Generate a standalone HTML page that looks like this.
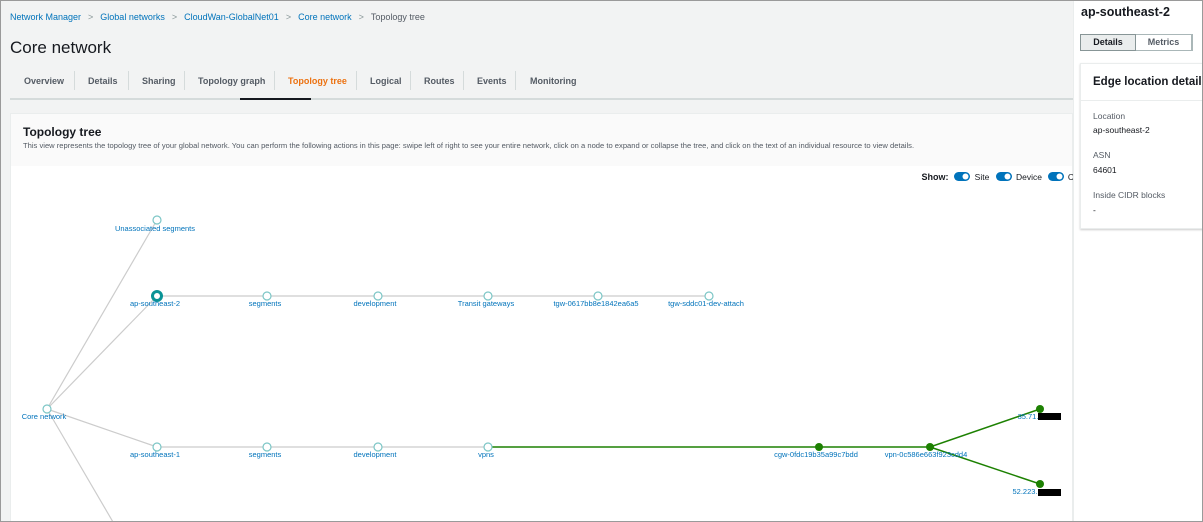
<!DOCTYPE html>
<html><head><style>
*{box-sizing:border-box;margin:0;padding:0}
html,body{width:1203px;height:522px;overflow:hidden}
body{font-family:"Liberation Sans",sans-serif;background:#f2f3f3;position:relative}
.a{position:absolute;white-space:nowrap}
.bc{top:12px;left:10px;font-size:9px;color:#0073bb}
.bc span.s{color:#879596;margin:0 7px}
.bc .c{color:#545b64}
h1{position:absolute;top:38px;left:10px;font-size:17px;font-weight:400;color:#16191f}
.tabs{top:76px;left:10px;font-size:9px;font-weight:bold;color:#545b64}
.tabs span{position:absolute;top:0}
.sep{position:absolute;top:71px;width:1px;height:19px;background:#d5dbdb}
.card{position:absolute;left:10px;top:113px;width:1063px;height:420px;background:#fff;border:1px solid #eaeded}
.ch{position:absolute;left:0;top:0;width:100%;height:52px;background:#fafafa}
.panel{position:absolute;left:1073px;top:0;width:130px;height:522px;background:#fff;border-left:1px solid #eaeded;overflow:hidden}
svg text{font-family:"Liberation Sans",sans-serif;font-size:7.5px;fill:#0073bb;text-anchor:middle}
.frame{position:absolute;left:0;top:0;width:1203px;height:522px;border:1px solid #9a9a9a;pointer-events:none}
</style></head><body>
<div class="a bc">Network Manager<span class="s">&gt;</span>Global networks<span class="s">&gt;</span>CloudWan-GlobalNet01<span class="s">&gt;</span>Core network<span class="s">&gt;</span><span class="c">Topology tree</span></div>
<h1>Core network</h1>
<div class="a tabs" style="width:700px;height:20px">
<span style="left:14px">Overview</span><span style="left:78px">Details</span><span style="left:132px">Sharing</span><span style="left:188px">Topology graph</span><span style="left:278px;color:#ec7211">Topology tree</span><span style="left:360px">Logical</span><span style="left:414px">Routes</span><span style="left:467px">Events</span><span style="left:520px">Monitoring</span>
</div>
<div class="sep" style="left:74px"></div><div class="sep" style="left:128px"></div><div class="sep" style="left:184px"></div><div class="sep" style="left:274px"></div><div class="sep" style="left:356px"></div><div class="sep" style="left:410px"></div><div class="sep" style="left:463px"></div><div class="sep" style="left:515px"></div>
<div class="a" style="left:10px;top:98px;width:1063px;height:2px;background:#d5dbdb"></div>
<div class="a" style="left:240px;top:98px;width:71px;height:2px;background:#16191f"></div>
<div class="card"><div class="ch"></div>
<div class="a" style="left:12px;top:11px;font-size:12px;font-weight:bold;color:#16191f">Topology tree</div>
<div class="a" style="left:12px;top:27px;font-size:7.6px;color:#545b64">This view represents the topology tree of your global network. You can perform the following actions in this page: swipe left of right to see your entire network, click on a node to expand or collapse the tree, and click on the text of an individual resource to view details.</div>
</div>
<svg class="a" style="left:0;top:0" width="1073" height="522">
<text x="935" y="180" style="font-size:9px;fill:#16191f;font-weight:bold">Show:</text>
<rect x="954" y="172" width="16" height="9" rx="4.5" fill="#0073bb"/><circle cx="965.5" cy="176.5" r="3" fill="#fff"/>
<text x="982" y="180" style="font-size:8.5px;fill:#16191f">Site</text>
<rect x="996" y="172" width="16" height="9" rx="4.5" fill="#0073bb"/><circle cx="1007.5" cy="176.5" r="3" fill="#fff"/>
<text x="1029" y="180" style="font-size:8.5px;fill:#16191f">Device</text>
<rect x="1048" y="172" width="16" height="9" rx="4.5" fill="#0073bb"/><circle cx="1059.5" cy="176.5" r="3" fill="#fff"/>
<text x="1071" y="180" style="font-size:8.5px;fill:#16191f">C</text>
<g stroke="#ccc" stroke-width="1.2" fill="none">
<path d="M47 409L157 220M47 409L157 296M47 409L157 447M47 409L113 522M157 296H709M157 447H488"/>
</g>
<path d="M488 447H930L1040 409M930 447L1040 484" stroke="#1d8102" stroke-width="1.5" fill="none"/>
<g fill="#fff" stroke="#7cc6c6" stroke-width="1.2">
<circle cx="47" cy="409" r="4"/><circle cx="157" cy="220" r="4"/><circle cx="157" cy="447" r="4"/>
<circle cx="267" cy="296" r="4"/><circle cx="378" cy="296" r="4"/><circle cx="488" cy="296" r="4"/><circle cx="598" cy="296" r="4"/><circle cx="709" cy="296" r="4"/>
<circle cx="267" cy="447" r="4"/><circle cx="378" cy="447" r="4"/><circle cx="488" cy="447" r="4"/>
</g>
<circle cx="157" cy="296" r="4.5" fill="#fff" stroke="#0a9396" stroke-width="3"/>
<g fill="#1d8102"><circle cx="819" cy="447" r="4"/><circle cx="930" cy="447" r="4"/><circle cx="1040" cy="409" r="4"/><circle cx="1040" cy="484" r="4"/></g>
<text x="44" y="419">Core network</text>
<text x="155" y="231">Unassociated segments</text>
<text x="155" y="306">ap-southeast-2</text><text x="265" y="306">segments</text><text x="375" y="306">development</text><text x="486" y="306">Transit gateways</text><text x="596" y="306">tgw-0617bb8e1842ea6a5</text><text x="706" y="306">tgw-sddc01-dev-attach</text>
<text x="155" y="457">ap-southeast-1</text><text x="265" y="457">segments</text><text x="375" y="457">development</text><text x="486" y="457">vpns</text>
<text x="816" y="457">cgw-0fdc19b35a99c7bdd</text><text x="926" y="457">vpn-0c586e663f923cdd4</text>
<text x="1028" y="419">35.71.</text><rect x="1038" y="413" width="23" height="7" fill="#000"/>
<text x="1025" y="494">52.223.</text><rect x="1038" y="489" width="23" height="7" fill="#000"/>
</svg>
<div class="panel">
<div class="a" style="left:7px;top:5px;font-size:12.5px;font-weight:bold;color:#16191f">ap-southeast-2</div>
<div class="a" style="left:6px;top:34px;width:56px;height:17px;border:1px solid #879596;background:#eaeded;font-size:9px;font-weight:bold;text-align:center;line-height:15px;color:#16191f">Details</div>
<div class="a" style="left:62px;top:34px;width:56px;height:17px;border:1px solid #aab7b8;border-left:none;font-size:9px;font-weight:bold;text-align:center;line-height:15px;color:#545b64">Metrics</div>
<div class="a" style="left:118px;top:34px;width:14px;height:17px;border-left:1px solid #aab7b8"></div>
<div class="a" style="left:6px;top:63px;width:130px;height:166px;border:1px solid #eaeded;box-shadow:0 1px 2px rgba(0,0,0,.2)">
<div class="a" style="left:12px;top:12px;font-size:11.5px;font-weight:bold;color:#16191f">Edge location details</div>
<div class="a" style="left:0;top:36px;width:130px;height:1px;background:#eaeded"></div>
<div class="a" style="left:12px;top:47px;font-size:8.5px;color:#545b64">Location</div>
<div class="a" style="left:12px;top:61px;font-size:8.5px;color:#16191f">ap-southeast-2</div>
<div class="a" style="left:12px;top:86px;font-size:8.5px;color:#545b64">ASN</div>
<div class="a" style="left:12px;top:101px;font-size:8.5px;color:#16191f">64601</div>
<div class="a" style="left:12px;top:126px;font-size:8.5px;color:#545b64">Inside CIDR blocks</div>
<div class="a" style="left:12px;top:141px;font-size:8.5px;color:#16191f">-</div>
</div>
</div>
<div class="frame"></div>
</body></html>
